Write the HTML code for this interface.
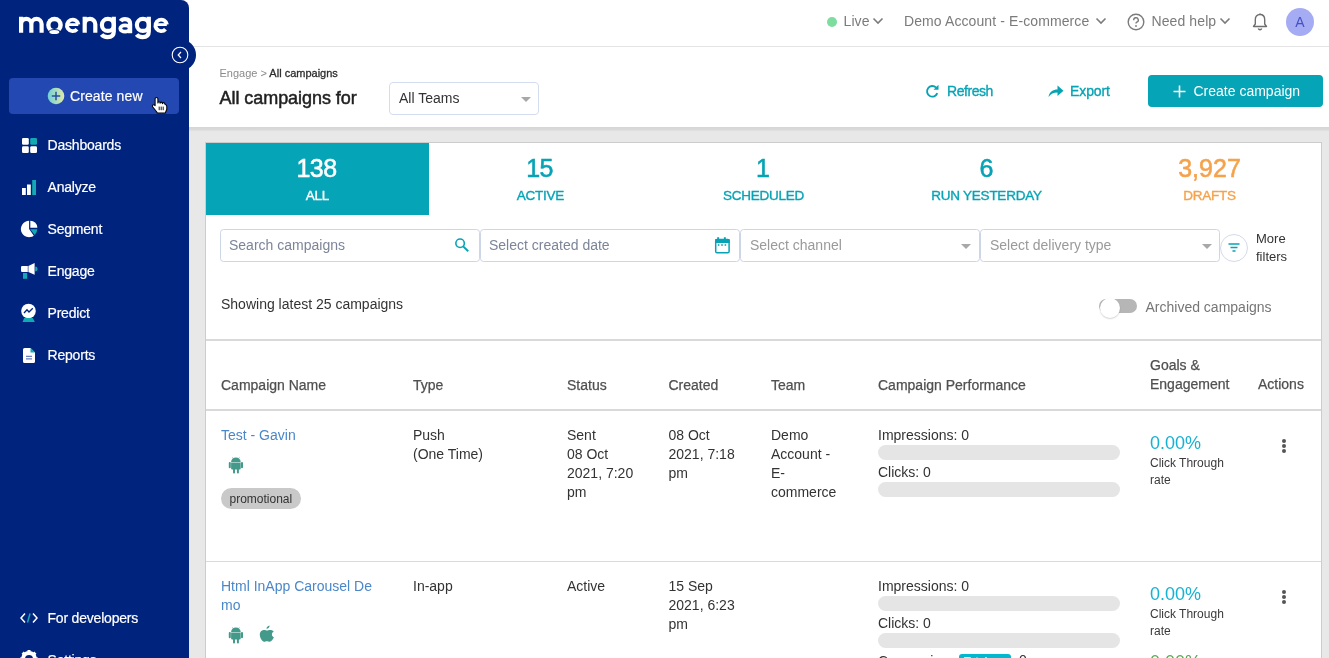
<!DOCTYPE html>
<html><head><meta charset="utf-8">
<style>
*{box-sizing:border-box;margin:0;padding:0}
html,body{width:1329px;height:658px;overflow:hidden;background:#e8e8e8;will-change:transform;font-family:"Liberation Sans",sans-serif;}
.a{position:absolute;white-space:nowrap;line-height:1}
#side{position:absolute;left:0;top:0;width:189px;height:658px;background:#00237d;border-top-right-radius:8px;}
#bump{position:absolute;left:164px;top:39px;width:32px;height:32px;border-radius:50%;background:#00237d;}
#topbar{position:absolute;left:189px;top:0;width:1140px;height:127px;background:#fff;}
#hline{position:absolute;left:189px;top:46px;width:1140px;height:1px;background:#e3e3e3}
#shadow{position:absolute;left:189px;top:127px;width:1140px;height:4px;background:linear-gradient(#d5d5d5,#d9d9d9 60%,#e2e2e2)}
#card{position:absolute;left:205px;top:142px;width:1117px;height:530px;background:#fff;border:1px solid #cccccc;}
.nav{color:#fff;font-size:14px;letter-spacing:-0.2px;-webkit-text-stroke:0.2px #fff}
.hdr{color:#7b7b7b;font-size:14px;letter-spacing:0.1px}
.teal{color:#07a3b5}
.box{position:absolute;top:229px;height:33px;border:1px solid #cdd6e6;border-radius:3.5px;background:#fff}
.ph{color:#7c8598;font-size:14px}
.ph2{color:#9a9a9a;font-size:14px}
.tri{position:absolute;width:0;height:0;border-left:5px solid transparent;border-right:5px solid transparent;border-top:5px solid #a8a8a8}
.th{color:#505050;font-size:14px;-webkit-text-stroke:0.25px #505050}
.td{color:#333;font-size:14px}
.sep{position:absolute;left:206px;width:1115px;height:2px;background:#d9d9d9}
.bar{position:absolute;left:878px;width:242px;height:15px;border-radius:7.5px;background:#e5e5e5}
.pct{color:#17b2d3;font-size:18px}
.ctr{color:#3a3a3a;font-size:12px}
.dots{position:absolute;width:4px;height:4px;border-radius:50%;background:#555}
</style></head><body>

<!-- SIDEBAR -->
<div class="a" style="left:170px;top:0;width:20px;height:20px;background:#fff"></div>
<div id="side"></div>


<svg class="a" style="left:0;top:0" width="189" height="45" viewBox="0 0 189 45">
<g fill="none" stroke="#fff" stroke-width="4.2">
<path d="M21.1,32.8 V16.8 M21.1,24 A5.125,5.125 0 0 1 31.35,24 V32.8 M31.35,24 A5.125,5.125 0 0 1 41.6,24 V32.8"/>
<path d="M67,24.6 H78.3" stroke-width="2.8"/><path d="M78.4,24.6 A5.75,5.75 0 1 0 77,29.2" stroke-width="3.9"/>
<path d="M84.7,32.8 V16.8 M84.7,24.2 A5.3,5.3 0 0 1 95.3,24.2 V32.8"/>
<circle cx="107.9" cy="24.9" r="6"/>
<path d="M113.8,16.8 V31.5 C113.8,35.5 111,37.1 107.6,37.1 C105,37.1 102.8,36.2 101.6,34.6"/>
<path d="M120.6,21.2 C121.6,19.7 123.3,19.1 125,19.1 C128.2,19.1 130.1,20.9 130.1,24 V33.3"/>
<ellipse cx="125" cy="28.5" rx="4.7" ry="3.1" stroke-width="3.8"/>
<circle cx="142.9" cy="24.9" r="6"/>
<path d="M148.8,16.8 V31.5 C148.8,35.5 146,37.1 142.6,37.1 C140,37.1 137.8,36.2 136.6,34.6"/>
<path d="M155.5,24.6 H166.8" stroke-width="2.8"/><path d="M166.9,24.6 A5.75,5.75 0 1 0 165.5,29.2" stroke-width="3.9"/>
</g>
<circle cx="54.5" cy="25.1" r="8.3" fill="#fff"/>
<circle cx="54.4" cy="25.1" r="3.9" fill="#00237d"/>
<path d="M45.5,37 A9,8 0 0 1 63.5,37 Z" fill="#00237d"/>
<ellipse cx="54.3" cy="32" rx="5" ry="2.1" fill="#fff"/>
</svg>



<div class="a" style="left:9px;top:78px;width:170px;height:36px;background:#2348b2;border-radius:4px"></div>
<svg class="a" style="left:46.5px;top:87px" width="18" height="18" viewBox="0 0 18 18">
<defs><linearGradient id="g1" x1="0" y1="0" x2="1" y2="0"><stop offset="0" stop-color="#6fd0d6"/><stop offset="1" stop-color="#e0eca6"/></linearGradient></defs>
<circle cx="9" cy="9" r="8.3" fill="url(#g1)"/>
<path d="M9 4.8V13.2M4.8 9H13.2" stroke="#2a4ca8" stroke-width="1.5"/>
</svg>
<div class="a nav" style="left:70px;top:89.4px;font-size:14px;letter-spacing:0.1px">Create new</div>

<!-- cursor -->
<svg class="a" style="left:151px;top:96px" width="18" height="19" viewBox="0 0 18 19">
<path d="M4.1,2.8 A1.4,1.4 0 0 1 6.9,2.8 L6.9,6.9 A1.1,1.1 0 0 1 9.1,6.9 L9.1,7.2 A1.1,1.1 0 0 1 11.3,7.2 L11.4,7.7 A1.2,1.2 0 0 1 13.8,8 L14.3,8.4 C15.3,8.7 15.8,9.4 15.8,10.4 L15.8,13.2 L14.3,17 L6.2,17 L5.8,16 L1.8,11 C1.1,10.1 1.3,8.9 2.4,8.7 C3.2,8.6 3.6,9.1 4.1,9.6 Z" fill="#fff" stroke="#000" stroke-width="1.05" stroke-linejoin="round"/>
<path d="M8.2,10.6 V14.2 M10.2,10.6 V14.2 M12.2,10.6 V14.2" stroke="#000" stroke-width="0.9"/>
</svg>

<!-- nav icons -->
<svg class="a" style="left:22px;top:138px" width="15" height="15" viewBox="0 0 15 15">
<rect x="0" y="0" width="6.8" height="6.8" rx="1.3" fill="#fff"/>
<rect x="8.2" y="0" width="6.8" height="6.8" rx="1.3" fill="#12a9b3"/>
<rect x="0" y="8.2" width="6.8" height="6.8" rx="1.3" fill="#fff"/>
<rect x="8.2" y="8.2" width="6.8" height="6.8" rx="1.3" fill="#fff"/>
</svg>
<div class="a nav" style="left:47.5px;top:138.3px">Dashboards</div>

<svg class="a" style="left:22px;top:180px" width="15" height="15" viewBox="0 0 15 15">
<rect x="0" y="8" width="3.8" height="7" fill="#fff"/>
<rect x="5" y="4.5" width="3.8" height="10.5" fill="#fff"/>
<rect x="10.2" y="0" width="3.8" height="15" fill="#12a9b3"/>
</svg>
<div class="a nav" style="left:47.5px;top:180.3px">Analyze</div>

<svg class="a" style="left:20px;top:220px" width="19" height="19" viewBox="0 0 19 19">
<path d="M9.1,9 L13.8,15.7 A8.2,8.2 0 1 1 9.1,0.8 Z" fill="#fff"/>
<path d="M10.3,7.8 V0.7 A7.1,7.1 0 0 1 17.4,7.8 Z" fill="#fff"/>
<path d="M10.2,9.2 L17.3,9.2 A8.2,8.2 0 0 1 14.7,15 Z" fill="#12a9b3"/>
</svg>
<div class="a nav" style="left:47.5px;top:222.3px">Segment</div>

<svg class="a" style="left:21px;top:262px" width="17" height="18" viewBox="0 0 17 18">
<path d="M1.2,4 H6.8 V10 H1.2 A1.2,1.2 0 0 1 0,8.8 V5.2 A1.2,1.2 0 0 1 1.2,4Z" fill="#fff"/>
<path d="M7.4,4 L13.6,0.9 V12.7 L7.4,10Z" fill="#fff"/>
<path d="M14.2,4.6 A2.4,2.4 0 0 1 14.2,9.4Z" fill="#12a9b3"/>
<rect x="2" y="11" width="4.2" height="5.8" fill="#12a9b3"/>
</svg>
<div class="a nav" style="left:47.5px;top:264.3px">Engage</div>

<svg class="a" style="left:21px;top:303px" width="16" height="20" viewBox="0 0 16 20">
<circle cx="7.5" cy="8" r="7.3" fill="#fff"/>
<path d="M3 10 L6 6.8 L8 9 L11.8 5.3" fill="none" stroke="#00237d" stroke-width="1.3"/>
<path d="M3.2 15 H11.8 L13.8 19 H1.5Z" fill="#12a9b3"/>
</svg>
<div class="a nav" style="left:47.5px;top:306.3px">Predict</div>

<svg class="a" style="left:23px;top:347px" width="13" height="17" viewBox="0 0 13 17">
<path d="M1.5 1 H7.5 L12 5.5 V14.5 A1.5 1.5 0 0 1 10.5 16 H1.5 A1.5 1.5 0 0 1 0 14.5 V2.5 A1.5 1.5 0 0 1 1.5 1Z" fill="#fff"/>
<path d="M7.5 1 L12 5.5 H7.5Z" fill="#12a9b3"/>
<path d="M3 9.3 H9M3 11.8 H9" stroke="#6c7fbf" stroke-width="1.2"/>
</svg>
<div class="a nav" style="left:47.5px;top:348.3px">Reports</div>

<svg class="a" style="left:20px;top:612px" width="18" height="12" viewBox="0 0 18 12">
<path d="M5 1.5 L1 6 L5 10.5M13 1.5 L17 6 L13 10.5" fill="none" stroke="#fff" stroke-width="1.5"/>
<path d="M10 1.5 L7.5 10.5" stroke="#12a9b3" stroke-width="1.5"/>
</svg>
<div class="a nav" style="left:47.5px;top:611.3px">For developers</div>

<svg class="a" style="left:20px;top:650px" width="18" height="18" viewBox="0 0 18 18">
<circle cx="9" cy="9" r="6" fill="none" stroke="#fff" stroke-width="4"/>
<path d="M9 0v4M9 14v4M0 9h4M14 9h4M2.6 2.6l2.8 2.8M12.6 12.6l2.8 2.8M2.6 15.4l2.8-2.8M12.6 5.4l2.8-2.8" stroke="#fff" stroke-width="3"/>
</svg>
<div class="a nav" style="left:47.5px;top:653.3px">Settings</div>

<!-- TOP AREA -->
<div id="topbar"></div>
<div id="hline"></div>
<div id="shadow"></div>
<div id="bump2" style="position:absolute;left:164px;top:39px;width:32px;height:32px;border-radius:50%;background:#00237d;"></div>
<svg class="a" style="left:170px;top:45px" width="20" height="20" viewBox="0 0 20 20">
<circle cx="10" cy="10" r="7.8" fill="none" stroke="#fff" stroke-width="1.1"/>
<path d="M11 7 L8.2 10 L11 13" fill="none" stroke="#fff" stroke-width="1.2"/>
</svg>

<div class="a" style="left:827px;top:17px;width:10px;height:10px;border-radius:50%;background:#7fdc9f"></div>
<div class="a hdr" style="left:843.5px;top:13.9px">Live</div>
<svg class="a" style="left:872px;top:17px" width="12" height="8" viewBox="0 0 12 8"><path d="M1.5 1.5 L6 6 L10.5 1.5" fill="none" stroke="#7b7b7b" stroke-width="1.6"/></svg>
<div class="a hdr" style="left:904px;top:13.9px">Demo Account - E-commerce</div>
<svg class="a" style="left:1095px;top:17px" width="12" height="8" viewBox="0 0 12 8"><path d="M1.5 1.5 L6 6 L10.5 1.5" fill="none" stroke="#7b7b7b" stroke-width="1.6"/></svg>
<svg class="a" style="left:1127px;top:13px" width="18" height="18" viewBox="0 0 18 18"><circle cx="9" cy="9" r="7.8" fill="none" stroke="#7b7b7b" stroke-width="1.4"/><path d="M6.7 7.2 A2.3 2.3 0 1 1 9.8 9.2 C9.2 9.5 9 9.9 9 10.6" fill="none" stroke="#7b7b7b" stroke-width="1.4"/><circle cx="9" cy="13" r="0.9" fill="#7b7b7b"/></svg>
<div class="a hdr" style="left:1151.5px;top:13.9px">Need help</div>
<svg class="a" style="left:1219px;top:17px" width="12" height="8" viewBox="0 0 12 8"><path d="M1.5 1.5 L6 6 L10.5 1.5" fill="none" stroke="#7b7b7b" stroke-width="1.6"/></svg>
<svg class="a" style="left:1252px;top:13px" width="16" height="18" viewBox="0 0 16 18"><path d="M8 1.5 C4.8 1.5 3.3 4 3.3 6.5 V11 L1.5 13.5 H14.5 L12.7 11 V6.5 C12.7 4 11.2 1.5 8 1.5Z" fill="none" stroke="#6f6f6f" stroke-width="1.4" stroke-linejoin="round"/><path d="M6.3 15.5 A1.8 1.8 0 0 0 9.7 15.5" fill="none" stroke="#6f6f6f" stroke-width="1.4"/><path d="M8 0.5V1.5" stroke="#6f6f6f" stroke-width="1.4"/></svg>
<div class="a" style="left:1286px;top:8px;width:28px;height:28px;border-radius:50%;background:#a5acf3;color:#4450c4;font-size:14px;line-height:28px;text-align:center">A</div>

<!-- page header -->
<div class="a" style="left:219.5px;top:67.9px;font-size:11px;color:#8a8a8a">Engage &gt; <span style="color:#2d2d2d;-webkit-text-stroke:0.3px #2d2d2d">All campaigns</span></div>
<div class="a" style="left:219.5px;top:89.1px;font-size:18px;color:#1f1f1f;-webkit-text-stroke:0.5px #1f1f1f;letter-spacing:-0.05px">All campaigns for</div>
<div class="a" style="left:389px;top:82px;width:150px;height:33px;border:1px solid #d3ddef;border-radius:4px;background:#fff"></div>
<div class="a" style="left:399px;top:91px;font-size:14px;color:#333">All Teams</div>
<div class="tri" style="left:520.7px;top:97px"></div>

<svg class="a" style="left:925px;top:84px" width="15" height="15" viewBox="0 0 15 15"><path d="M12.3 9.2 A5.3 5.3 0 1 1 11 3.5" fill="none" stroke="#07a3b5" stroke-width="1.9"/><path d="M13.5 0.8 V5.8 H8.5Z" fill="#07a3b5"/></svg>
<div class="a teal" style="left:947px;top:84.4px;font-size:14px;-webkit-text-stroke:0.35px #07a3b5;letter-spacing:-0.45px">Refresh</div>
<svg class="a" style="left:1048px;top:84px" width="16" height="14" viewBox="0 0 16 14"><path d="M0.5 13 C1.5 7.5 5 5.5 9.5 5.5 V1.5 L15.5 6.8 L9.5 12 V8.5 C5.5 8.5 2.8 9.8 0.5 13Z" fill="#07a3b5"/></svg>
<div class="a teal" style="left:1070px;top:84.4px;font-size:14px;-webkit-text-stroke:0.35px #07a3b5;letter-spacing:-0.1px">Export</div>
<div class="a" style="left:1148px;top:75px;width:175px;height:32px;border-radius:4px;background:#05a4b6"></div>
<svg class="a" style="left:1173px;top:85px" width="13" height="13" viewBox="0 0 13 13"><path d="M6.5 0.5V12.5M0.5 6.5H12.5" stroke="#fff" stroke-width="1.6"/></svg>
<div class="a" style="left:1193.5px;top:84.4px;font-size:14px;color:#fff">Create campaign</div>

<!-- CARD -->
<div id="card"></div>
<div class="a" style="left:206px;top:143px;width:223px;height:72px;background:#05a4b6"></div>
<div class="a" style="left:206px;top:156.4px;width:223px;text-align:center;font-size:25px;color:#fff;letter-spacing:-0.6px;-webkit-text-stroke:0.55px #fff;text-indent:-2px">138</div>
<div class="a" style="left:206px;top:188.6px;width:223px;text-align:center;font-size:13.5px;letter-spacing:-0.25px;color:#fff;-webkit-text-stroke:0.35px #fff">ALL</div>
<div class="a teal" style="left:429px;top:156.4px;width:223px;text-align:center;font-size:25px;letter-spacing:-0.6px;-webkit-text-stroke:0.55px #07a3b5;text-indent:-2px">15</div>
<div class="a teal" style="left:429px;top:188.6px;width:223px;text-align:center;font-size:13.5px;letter-spacing:-0.25px;-webkit-text-stroke:0.35px #07a3b5">ACTIVE</div>
<div class="a teal" style="left:652px;top:156.4px;width:223px;text-align:center;font-size:25px;-webkit-text-stroke:0.55px #07a3b5;text-indent:-1px">1</div>
<div class="a teal" style="left:652px;top:188.6px;width:223px;text-align:center;font-size:13.5px;letter-spacing:-0.25px;-webkit-text-stroke:0.35px #07a3b5">SCHEDULED</div>
<div class="a teal" style="left:875px;top:156.4px;width:223px;text-align:center;font-size:25px;-webkit-text-stroke:0.55px #07a3b5">6</div>
<div class="a teal" style="left:875px;top:188.6px;width:223px;text-align:center;font-size:13.5px;letter-spacing:-0.25px;-webkit-text-stroke:0.35px #07a3b5">RUN YESTERDAY</div>
<div class="a" style="left:1098px;top:156.4px;width:223px;text-align:center;font-size:25px;color:#f5a24c;-webkit-text-stroke:0.55px #f5a24c">3,927</div>
<div class="a" style="left:1098px;top:188.6px;width:223px;text-align:center;font-size:13.5px;letter-spacing:-0.25px;color:#f5a24c;-webkit-text-stroke:0.35px #f5a24c">DRAFTS</div>

<!-- filters -->
<div class="box" style="left:220px;width:260px"></div>
<div class="a ph" style="left:229px;top:238.2px">Search campaigns</div>
<svg class="a" style="left:454px;top:238px" width="16" height="15" viewBox="0 0 16 15"><circle cx="6.1" cy="5.2" r="4.25" fill="none" stroke="#07a3b5" stroke-width="1.6"/><path d="M9.2 8.4 L14.2 13.2" stroke="#07a3b5" stroke-width="2"/></svg>
<div class="box" style="left:480px;width:260px"></div>
<div class="a ph" style="left:489px;top:238.2px">Select created date</div>
<svg class="a" style="left:714px;top:237px" width="16" height="17" viewBox="0 0 16 17"><rect x="1.7" y="2.6" width="13.4" height="13.1" rx="1.3" fill="none" stroke="#07a3b5" stroke-width="1.5"/><rect x="1" y="1.9" width="14.8" height="4.2" rx="1" fill="#07a3b5"/><rect x="3.2" y="0.2" width="1.9" height="2.5" fill="#07a3b5"/><rect x="9.9" y="0.2" width="1.9" height="2.5" fill="#07a3b5"/><rect x="3.8" y="7.2" width="1.6" height="1.6" fill="#07a3b5"/><rect x="7.2" y="7.2" width="1.6" height="1.6" fill="#07a3b5"/><rect x="10.6" y="7.2" width="1.6" height="1.6" fill="#07a3b5"/></svg>
<div class="box" style="left:740px;width:240px"></div>
<div class="a ph2" style="left:750px;top:238.2px">Select channel</div>
<div class="tri" style="left:961px;top:244px"></div>
<div class="box" style="left:980px;width:240px"></div>
<div class="a ph2" style="left:990px;top:238.2px">Select delivery type</div>
<div class="tri" style="left:1202px;top:244px"></div>
<div class="a" style="left:1220px;top:234px;width:28px;height:28px;border-radius:50%;border:1px solid #d3dbea;background:#fff"></div>
<svg class="a" style="left:1227px;top:242px" width="14" height="12" viewBox="0 0 14 12"><path d="M1.5 2H12.5M3.5 5.5H10.5M5.5 9H8.5" stroke="#07a3b5" stroke-width="1.3"/></svg>
<div class="a" style="left:1256px;top:229.9px;font-size:13px;color:#333;line-height:18px">More<br>filters</div>

<div class="a td" style="left:221px;top:297.3px">Showing latest 25 campaigns</div>
<div class="a" style="left:1099px;top:299px;width:38px;height:14px;border-radius:7px;background:#b6b6b6"></div>
<div class="a" style="left:1100px;top:297.8px;width:20px;height:20px;border-radius:50%;background:#fff;box-shadow:0 1px 1.5px rgba(0,0,0,0.18)"></div>
<div class="a" style="left:1145.5px;top:300.3px;font-size:14px;color:#767676">Archived campaigns</div>

<div class="sep" style="top:339px"></div>
<div class="a th" style="left:221px;top:377.6px">Campaign Name</div>
<div class="a th" style="left:413px;top:377.6px">Type</div>
<div class="a th" style="left:567px;top:377.6px">Status</div>
<div class="a th" style="left:668.5px;top:377.6px">Created</div>
<div class="a th" style="left:771px;top:377.6px">Team</div>
<div class="a th" style="left:878px;top:377.6px">Campaign Performance</div>
<div class="a th" style="left:1150px;top:359.2px;line-height:19px;top:356.1px">Goals &amp;<br>Engagement</div>
<div class="a th" style="left:1258px;top:377.4px">Actions</div>
<div class="sep" style="top:409px"></div>

<!-- row 1 -->
<div class="a" style="left:221px;top:428.1px;font-size:14px;color:#4a87c9">Test - Gavin</div>
<svg class="a" style="left:228px;top:457px" width="16" height="17" viewBox="0 0 16 17"><path d="M3.1,4.9 A4.8,4.3 0 0 1 12.7,4.9 Z" fill="#43998a"/><path d="M3.1,5.5 H12.7 V11.6 A1,1 0 0 1 11.7,12.6 H4.1 A1,1 0 0 1 3.1,11.6Z" fill="#43998a"/><rect x="0.8" y="5.1" width="2" height="6.1" rx="0.9" fill="#43998a"/><rect x="13" y="5.1" width="2" height="6.1" rx="0.9" fill="#43998a"/><rect x="5" y="11.5" width="2" height="5" rx="0.9" fill="#43998a"/><rect x="8.9" y="11.5" width="2" height="5" rx="0.9" fill="#43998a"/><path d="M4.4,0.4 L5.3,1.6 M11.4,0.4 L10.5,1.6" stroke="#43998a" stroke-width="0.6"/></svg>
<div class="a" style="left:221px;top:488px;width:80px;height:21px;border-radius:10.5px;background:#c9c9c9"></div>
<div class="a" style="left:229.5px;top:492.6px;font-size:12px;color:#333">promotional</div>
<div class="a td" style="left:413px;top:425.6px;line-height:19px">Push<br>(One Time)</div>
<div class="a td" style="left:567px;top:425.6px;line-height:19px">Sent<br>08 Oct<br>2021, 7:20<br>pm</div>
<div class="a td" style="left:668.5px;top:425.6px;line-height:19px">08 Oct<br>2021, 7:18<br>pm</div>
<div class="a td" style="left:771px;top:425.6px;line-height:19px">Demo<br>Account -<br>E-<br>commerce</div>
<div class="a td" style="left:878px;top:428.1px">Impressions: 0</div>
<div class="bar" style="top:445px"></div>
<div class="a td" style="left:878px;top:465.1px">Clicks: 0</div>
<div class="bar" style="top:482px"></div>
<div class="a pct" style="left:1150px;top:434px">0.00%</div>
<div class="a ctr" style="left:1150px;top:454.9px;line-height:17px">Click Through<br>rate</div>
<div class="dots" style="left:1282px;top:439px"></div>
<div class="dots" style="left:1282px;top:444px"></div>
<div class="dots" style="left:1282px;top:449px"></div>
<div class="sep" style="top:561px;height:1px;background:#dadada"></div>

<!-- row 2 -->
<div class="a" style="left:221px;top:579.1px;font-size:14px;color:#4a87c9;line-height:19px;top:576.6px">Html InApp Carousel De<br>mo</div>
<svg class="a" style="left:228px;top:627px" width="16" height="17" viewBox="0 0 16 17"><path d="M3.1,4.9 A4.8,4.3 0 0 1 12.7,4.9 Z" fill="#43998a"/><path d="M3.1,5.5 H12.7 V11.6 A1,1 0 0 1 11.7,12.6 H4.1 A1,1 0 0 1 3.1,11.6Z" fill="#43998a"/><rect x="0.8" y="5.1" width="2" height="6.1" rx="0.9" fill="#43998a"/><rect x="13" y="5.1" width="2" height="6.1" rx="0.9" fill="#43998a"/><rect x="5" y="11.5" width="2" height="5" rx="0.9" fill="#43998a"/><rect x="8.9" y="11.5" width="2" height="5" rx="0.9" fill="#43998a"/><path d="M4.4,0.4 L5.3,1.6 M11.4,0.4 L10.5,1.6" stroke="#43998a" stroke-width="0.6"/></svg>
<svg class="a" style="left:258px;top:625px" width="18" height="18" viewBox="0 0 18 18"><g transform="translate(-0.5,0) scale(1.15,1)"><path d="M12.5 9.5 C12.5 7.5 14 6.6 14.2 6.5 C13.2 5 11.7 4.9 11.2 4.9 C10 4.8 8.9 5.6 8.3 5.6 C7.7 5.6 6.8 4.9 5.8 4.9 C4.4 4.9 2 6 2 9.5 C2 12.5 4 16.8 5.8 16.8 C6.8 16.8 7.2 16.2 8.2 16.2 C9.3 16.2 9.6 16.8 10.6 16.8 C12 16.8 13.5 14.3 14.3 12.3 C13.5 12 12.5 11 12.5 9.5Z" fill="#43998a"/><path d="M10.5 0.5 C10.7 1.8 9.5 3.8 7.8 3.8 C7.6 2.3 9 0.7 10.5 0.5Z" fill="#43998a"/></g></svg>
<div class="a td" style="left:413px;top:579.1px">In-app</div>
<div class="a td" style="left:567px;top:579.1px">Active</div>
<div class="a td" style="left:668.5px;top:576.6px;line-height:19px">15 Sep<br>2021, 6:23<br>pm</div>
<div class="a td" style="left:878px;top:579.1px">Impressions: 0</div>
<div class="bar" style="top:596px"></div>
<div class="a td" style="left:878px;top:616.1px">Clicks: 0</div>
<div class="bar" style="top:633px"></div>
<div class="a td" style="left:878px;top:653.8px">Conversions</div>
<div class="a" style="left:959px;top:654px;width:52px;height:16px;border-radius:3px;background:#02b8d1"></div>
<div class="a" style="left:964px;top:655.5px;font-size:11px;color:#fff;-webkit-text-stroke:0.2px #fff">Total</div>
<div class="a td" style="left:1019px;top:653.1px">0</div>
<div class="a pct" style="left:1150px;top:585px">0.00%</div>
<div class="a ctr" style="left:1150px;top:605.9px;line-height:17px">Click Through<br>rate</div>
<div class="a pct" style="left:1150px;top:653px;color:#4caf50">0.00%</div>
<div class="dots" style="left:1282px;top:590px"></div>
<div class="dots" style="left:1282px;top:595px"></div>
<div class="dots" style="left:1282px;top:600px"></div>

</body></html>
